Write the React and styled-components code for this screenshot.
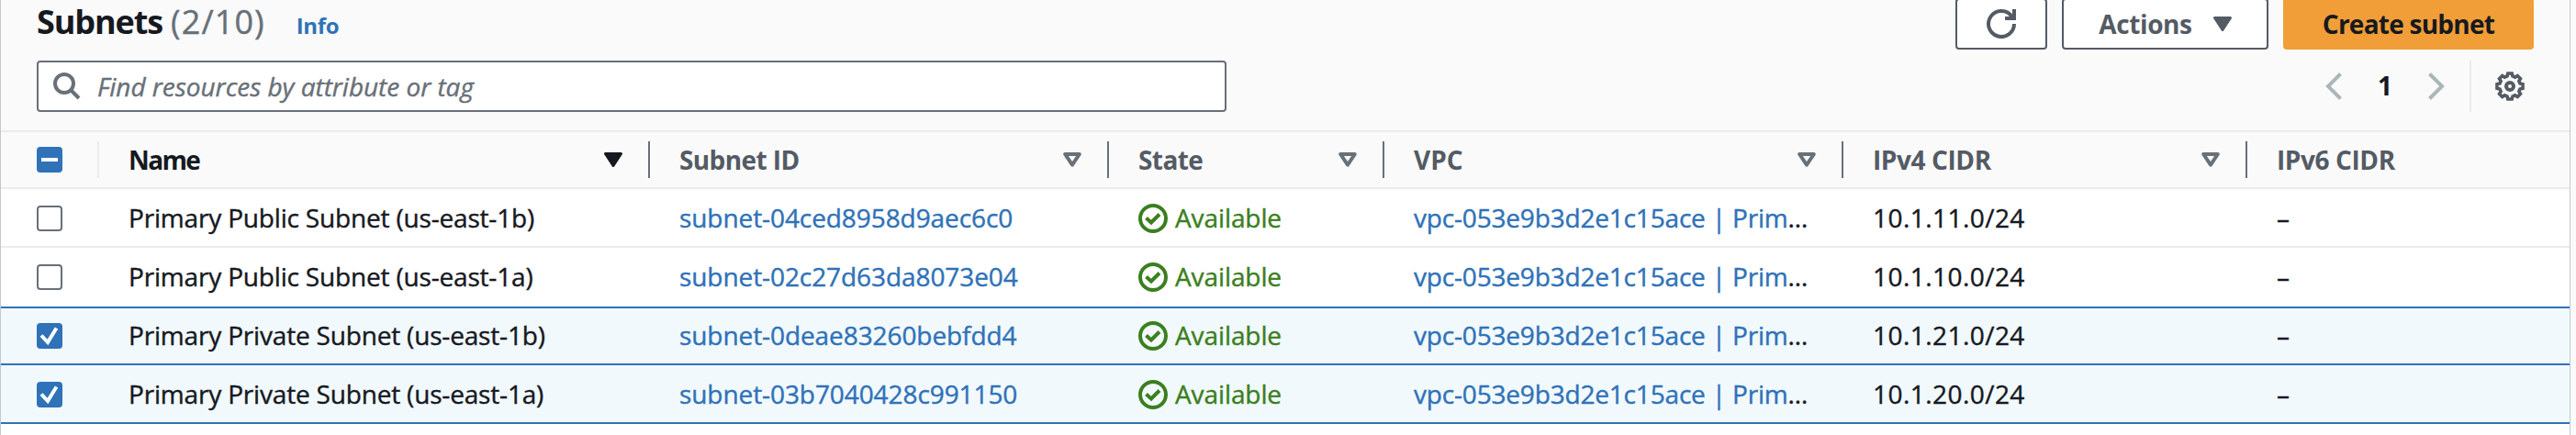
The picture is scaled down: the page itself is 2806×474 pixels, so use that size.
import React from "react";
import styled, { createGlobalStyle, css } from "styled-components";

const color = {
  text: "#16191f",
  heading: "#545b64",
  muted: "#687078",
  link: "#2f72b8",
  success: "#3b7f20",
  accent: "#f19e38",
  divider: "#eaebeb",
  surface: "#fafafa",
  selected: "#f2f9fd",
  disabled: "#aab7b8",
};

const GlobalStyle = createGlobalStyle`
  * { box-sizing: border-box; }
  body {
    margin: 0;
    background: #fafafa;
    color: ${color.text};
    font: 400 28px/36px "Open Sans", "Noto Sans", sans-serif;
    overflow: hidden;
  }
`;

const Panel = styled.section`
  width: 2800px;
  height: 474px;
  overflow: hidden;
  background: #fff;
  border-left: 1px solid #c3c9cc;
  border-right: 1px solid #c3c9cc;
`;

const PanelHeader = styled.header`
  display: flow-root;
  height: 142px;
  padding: 0 39px;
  background: ${color.surface};
`;

const TitleBar = styled.div`
  display: flex;
  justify-content: space-between;
  height: 56px;
  margin-top: -2px;
`;

const TitleGroup = styled.div`
  display: flex;
  align-items: baseline;
  padding-top: 1px;
`;

const Title = styled.h2`
  margin: 0;
  font-size: 36px;
  line-height: 50px;
  font-weight: 700;
  letter-spacing: -1.1px;
`;

const Counter = styled.span`
  margin-left: 9px;
  font-size: 36px;
  letter-spacing: 1.1px;
  color: ${color.muted};
  -webkit-text-stroke: 0.4px currentColor;
`;

const InfoLink = styled.a`
  margin-left: 34px;
  font-size: 24px;
  font-weight: 700;
  letter-spacing: -0.4px;
  color: ${color.link};
`;

const ButtonGroup = styled.div`
  display: flex;
  gap: 16px;
`;

const Button = styled.button`
  display: flex;
  align-items: center;
  justify-content: center;
  gap: 23px;
  width: ${(p) => p.$width}px;
  height: 56px;
  padding: 0 0 1px;
  border: 2px solid ${color.heading};
  border-radius: 4px;
  background: #fff;
  color: ${color.heading};
  font: inherit;
  font-weight: 700;
  letter-spacing: -0.4px;
  ${(p) =>
    p.$primary &&
    css`
      border-color: ${color.accent};
      background: ${color.accent};
      color: ${color.text};
      letter-spacing: -0.75px;
    `}
`;

const FilterBar = styled.div`
  display: flex;
  justify-content: space-between;
  height: 56px;
  margin-top: 12px;
`;

const SearchBox = styled.div`
  display: flex;
  align-items: center;
  gap: 18px;
  width: 1296px;
  padding-left: 16px;
  border: 2px solid ${color.muted};
  border-radius: 4px;
  background: #fff;
`;

const Placeholder = styled.span`
  font-style: italic;
  letter-spacing: -0.04px;
  color: ${color.muted};
  -webkit-text-stroke: 0.4px currentColor;
`;

const Pagination = styled.div`
  display: flex;
  align-items: center;
`;

const PageNumber = styled.span`
  width: 94px;
  padding-bottom: 2px;
  text-align: center;
  font-weight: 700;
`;

const Preferences = styled.div`
  display: flex;
  align-items: center;
  justify-content: flex-end;
  width: 70px;
  height: 56px;
  margin-left: 27px;
  padding-right: 10px;
  border-left: 2px solid ${color.divider};
`;

const rowGrid = css`
  display: grid;
  grid-template-columns: 107px 600px 500px 300px 500px 440px 1fr;
  height: 64px;
  border-top: 2px solid transparent;
  border-bottom: 2px solid transparent;
`;

const HeaderRow = styled.div`
  ${rowGrid}
  background: ${color.surface};
  border-color: ${color.divider};
`;

const HeaderCell = styled.div`
  display: flex;
  align-items: center;
  justify-content: space-between;
  height: 40px;
  align-self: center;
  padding: 0 28px 0 32px;
  border-right: 2px solid ${(p) => (p.$last ? "transparent" : color.muted)};
  font-weight: 700;
  color: ${(p) => (p.$sorted ? color.text : color.heading)};
`;

const HeaderLabel = styled.span`
  padding-bottom: 1px;
  letter-spacing: ${(p) => p.$tracking}px;
`;

const SelectAllCell = styled(HeaderCell)`
  padding: 0 0 0 39px;
  border-color: ${color.divider};
`;

const Row = styled.div`
  ${rowGrid}
  border-bottom-color: ${(p) => (p.$divided ? color.divider : "transparent")};
  ${(p) =>
    p.$selected &&
    css`
      margin-left: -1px;
      border-left: 1px solid ${color.link};
      border-bottom-color: ${color.link};
      border-top-color: ${p.$joined ? color.selected : color.link};
      background: ${color.selected};
      box-shadow: -1px 0 0 ${color.link};
    `}
`;

const Cell = styled.div`
  display: flex;
  align-items: center;
  min-width: 0;
  padding: 0 32px 2px;
  white-space: pre;
  letter-spacing: ${(p) => p.$tracking ?? -0.18}px;
  -webkit-text-stroke: 0.4px currentColor;
`;

const SelectCell = styled(Cell)`
  padding: 0 0 0 39px;
`;

const ResourceLink = styled.a`
  color: ${color.link};
`;

const Status = styled.span`
  display: flex;
  align-items: center;
  gap: 8px;
  color: ${color.success};

  svg {
    position: relative;
    top: 1px;
  }
`;

const CheckboxBox = styled.span`
  display: flex;
  width: 28px;
  height: 28px;
  border-radius: 4px;
  border: ${(p) => (p.$on ? "0" : `2px solid ${color.muted}`)};
  background: ${(p) => (p.$on ? color.link : "#fff")};
`;

function Checkbox({ state }) {
  return (
    <CheckboxBox $on={state !== "off"}>
      {state === "on" && (
        <svg width="28" height="28" fill="none" stroke="#fff" strokeWidth="4">
          <path d="M5 13.5 12 21 21.5 5.5" />
        </svg>
      )}
      {state === "mixed" && (
        <svg width="28" height="28" fill="none" stroke="#fff" strokeWidth="4">
          <path d="M5 14H23" />
        </svg>
      )}
    </CheckboxBox>
  );
}

const Caret = ({ filled }) => (
  <svg width="20" height="16" viewBox="0 0 20 16" stroke="currentColor" strokeLinejoin="round">
    {filled ? (
      <path d="M1.5 1.5H18.5L10 14.5Z" strokeWidth="3" fill="currentColor" />
    ) : (
      <path d="M2.2 2H17.8L10 13.6Z" strokeWidth="4" fill="none" />
    )}
  </svg>
);

const SortIcon = styled.span`
  display: flex;
  color: ${(p) => (p.$active ? color.text : color.muted)};
`;

const RefreshIcon = () => (
  <svg width="32" height="32" viewBox="0 0 32 32" fill="none" stroke="currentColor" strokeWidth="4">
    <path d="M30 16A14 14 0 1 1 27.5 8" />
    <path d="M30 0V10H20" />
    <path d="M23 10H30V4Z" fill="currentColor" stroke="none" />
  </svg>
);

const SearchIcon = () => (
  <svg width="30" height="30" viewBox="0 0 30 30" fill="none" stroke={color.muted} strokeWidth="4">
    <circle cx="12" cy="12" r="10" />
    <path d="M19 19 28 28" />
  </svg>
);

const Chevron = ({ next }) => (
  <svg width="18" height="30" viewBox="0 0 18 30" fill="none" stroke={color.disabled} strokeWidth="4">
    <path d={next ? "M1.5 1.5 15 15 1.5 28.5" : "M16.5 1.5 3 15 16.5 28.5"} />
  </svg>
);

const gearPath = (() => {
  const point = (radius, degrees) => {
    const a = ((degrees - 90) * Math.PI) / 180;
    return `${(16 + radius * Math.cos(a)).toFixed(2)} ${(16 + radius * Math.sin(a)).toFixed(2)}`;
  };
  const points = [];
  for (let tooth = 0; tooth < 360; tooth += 45) {
    points.push(point(11.4, tooth - 15), point(14.2, tooth - 9), point(14.2, tooth + 9), point(11.4, tooth + 15));
  }
  return `M${points.join("L")}Z`;
})();

const GearIcon = () => (
  <svg width="32" height="32" viewBox="0 0 32 32" fill="none" stroke={color.heading} strokeWidth="4">
    <path d={gearPath} strokeWidth="3.6" />
    <circle cx="16" cy="16" r="4" />
  </svg>
);

const StatusIcon = () => (
  <svg width="32" height="32" viewBox="0 0 32 32" fill="none" stroke="currentColor" strokeWidth="4">
    <circle cx="16" cy="16" r="14" />
    <path d="M8.5 15.5 14 20.5 23 11.5" />
  </svg>
);

const columns = [
  { label: "Name", tracking: -1.6 },
  { label: "Subnet ID", tracking: -0.6 },
  { label: "State", tracking: -0.6 },
  { label: "VPC", tracking: 0 },
  { label: "IPv4 CIDR", tracking: -0.4 },
  { label: "IPv6 CIDR", tracking: -0.4 },
];

const subnets = [
  { name: "Primary Public Subnet (us-east-1b)", id: "subnet-04ced8958d9aec6c0", cidr: "10.1.11.0/24", selected: false },
  { name: "Primary Public Subnet (us-east-1a)", id: "subnet-02c27d63da8073e04", cidr: "10.1.10.0/24", selected: false },
  { name: "Primary Private Subnet (us-east-1b)", id: "subnet-0deae83260bebfdd4", cidr: "10.1.21.0/24", selected: true },
  { name: "Primary Private Subnet (us-east-1a)", id: "subnet-03b7040428c991150", cidr: "10.1.20.0/24", selected: true },
];

export default function App() {
  return (
    <>
      <GlobalStyle />
      <Panel>
        <PanelHeader>
          <TitleBar>
            <TitleGroup>
              <Title>Subnets</Title>
              <Counter>(2/10)</Counter>
              <InfoLink>Info</InfoLink>
            </TitleGroup>
            <ButtonGroup>
              <Button $width={100} aria-label="Refresh">
                <RefreshIcon />
              </Button>
              <Button $width={225}>
                Actions
                <Caret filled />
              </Button>
              <Button $width={273} $primary>
                Create subnet
              </Button>
            </ButtonGroup>
          </TitleBar>
          <FilterBar>
            <SearchBox>
              <SearchIcon />
              <Placeholder>Find resources by attribute or tag</Placeholder>
            </SearchBox>
            <Pagination>
              <Chevron />
              <PageNumber>1</PageNumber>
              <Chevron next />
              <Preferences>
                <GearIcon />
              </Preferences>
            </Pagination>
          </FilterBar>
        </PanelHeader>

        <HeaderRow>
          <SelectAllCell>
            <Checkbox state="mixed" />
          </SelectAllCell>
          {columns.map(({ label, tracking }, i) => {
            const sorted = i === 0;
            const last = i === columns.length - 1;
            return (
              <HeaderCell key={label} $sorted={sorted} $last={last}>
                <HeaderLabel $tracking={tracking}>{label}</HeaderLabel>
                {!last && (
                  <SortIcon $active={sorted}>
                    <Caret filled={sorted} />
                  </SortIcon>
                )}
              </HeaderCell>
            );
          })}
        </HeaderRow>

        {subnets.map((s, i) => (
          <Row
            key={s.id}
            $selected={s.selected}
            $joined={s.selected && subnets[i - 1]?.selected}
            $divided={!s.selected && subnets[i + 1] && !subnets[i + 1].selected}
          >
            <SelectCell>
              <Checkbox state={s.selected ? "on" : "off"} />
            </SelectCell>
            <Cell>{s.name}</Cell>
            <Cell $tracking={-0.08}>
              <ResourceLink>{s.id}</ResourceLink>
            </Cell>
            <Cell $tracking={-0.1}>
              <Status>
                <StatusIcon />
                Available
              </Status>
            </Cell>
            <Cell>
              <ResourceLink>vpc-053e9b3d2e1c15ace | Prim</ResourceLink>…
            </Cell>
            <Cell $tracking={0.45}>{s.cidr}</Cell>
            <Cell>–</Cell>
          </Row>
        ))}
      </Panel>
    </>
  );
}
